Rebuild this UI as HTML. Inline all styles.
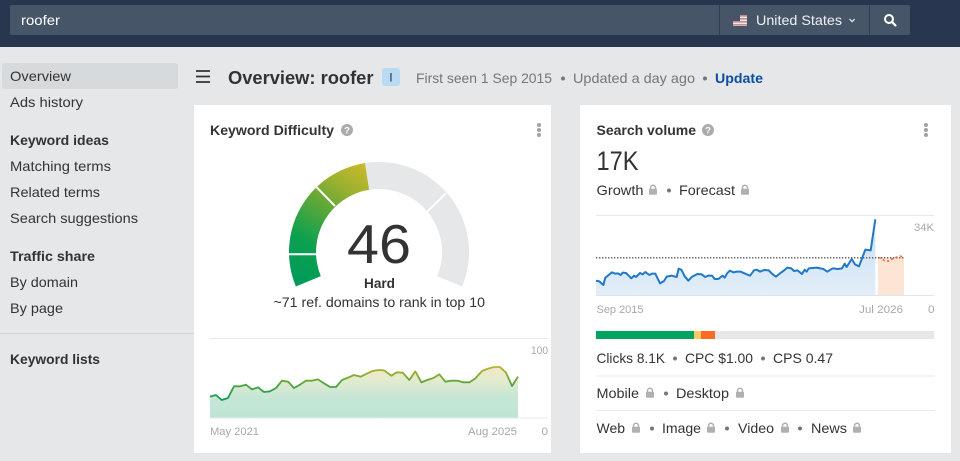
<!DOCTYPE html>
<html><head><meta charset="utf-8"><title>Overview: roofer</title>
<style>
html,body{margin:0;padding:0;width:960px;height:461px;overflow:hidden;background:#e6e7e9}
svg{display:block;position:absolute;left:0;top:0}
text{font-family:"Liberation Sans",sans-serif;font-size:14px;fill:#333}
.b{font-weight:700}
.g{fill:#767676}
.s{font-size:11px;fill:#a8a8a8}
</style></head>
<body>
<svg width="960" height="461" viewBox="0 0 960 461" xmlns="http://www.w3.org/2000/svg">
<defs>
<linearGradient id="gg" gradientUnits="userSpaceOnUse" x1="300" y1="285" x2="372" y2="172">
<stop offset="0" stop-color="#009a5b"/><stop offset=".3" stop-color="#0ca04f"/><stop offset=".6" stop-color="#5fa838"/><stop offset=".78" stop-color="#98b030"/><stop offset="1" stop-color="#c6b92b"/>
</linearGradient>
<linearGradient id="ls" gradientUnits="userSpaceOnUse" x1="0" y1="105" x2="0" y2="210">
<stop offset="0" stop-color="#c4b52c"/><stop offset=".2" stop-color="#9cae30"/><stop offset=".45" stop-color="#62a83a"/><stop offset="1" stop-color="#0a9c58"/>
</linearGradient>
<linearGradient id="lf" gradientUnits="userSpaceOnUse" x1="0" y1="108" x2="0" y2="263">
<stop offset="0" stop-color="#f5e7c6"/><stop offset=".25" stop-color="#e5ebcd"/><stop offset=".6" stop-color="#c6e6d6"/><stop offset="1" stop-color="#bfe5d5"/>
</linearGradient>
<linearGradient id="bf" gradientUnits="userSpaceOnUse" x1="0" y1="130" x2="0" y2="270">
<stop offset="0" stop-color="#d3e5f6"/><stop offset="1" stop-color="#e2eef9"/>
</linearGradient>
<g id="lock"><rect x="-4" y="-1.200" width="8" height="5.900" rx="1" fill="#b0b0b0"/><path d="M-2.500 -1V-2.200A2.500 2.500 0 0 1 2.500 -2.200V-1" fill="none" stroke="#b0b0b0" stroke-width="1.500"/></g>
<g id="keb"><circle cx="0" cy="-5" r="2" fill="#a2a2a2"/><circle cx="0" cy="0" r="2" fill="#a2a2a2"/><circle cx="0" cy="5" r="2" fill="#a2a2a2"/></g>
</defs>

<!-- header -->
<rect x="0" y="0" width="960" height="47" fill="#283650"/>
<rect x="10" y="5" width="900" height="30" rx="2" fill="#475569"/>
<rect x="719" y="5" width="1" height="30" fill="#2f3e57"/>
<rect x="869" y="5" width="1" height="30" fill="#2f3e57"/>
<text x="21" y="25" textLength="39" lengthAdjust="spacingAndGlyphs" style="fill:#fff">roofer</text>
<g>
<rect x="733" y="15" width="14" height="11" fill="#e8e8e8"/>
<rect x="733" y="15" width="14" height="1.600" fill="#c78d8d"/><rect x="733" y="18" width="14" height="1.600" fill="#c78d8d"/><rect x="733" y="21" width="14" height="1.600" fill="#c78d8d"/><rect x="733" y="24" width="14" height="1.600" fill="#c78d8d"/>
<rect x="733" y="15" width="7" height="6" fill="#4a5068"/>
</g>
<text x="756" y="25" textLength="86" lengthAdjust="spacingAndGlyphs" style="fill:#eef0f2">United States</text>
<path d="M849.500 19l2.600 2.600 2.600-2.600" fill="none" stroke="#e8eaed" stroke-width="1.200"/>
<circle cx="889" cy="19" r="4" fill="none" stroke="#fff" stroke-width="2"/>
<path d="M892 22l3.500 3.500" stroke="#fff" stroke-width="2.200" stroke-linecap="round"/>

<!-- sidebar -->
<rect x="2" y="63" width="176" height="26" rx="3" fill="#d7dadd"/>
<text x="10" y="81" textLength="61" lengthAdjust="spacingAndGlyphs">Overview</text>
<text x="10" y="107" textLength="73" lengthAdjust="spacingAndGlyphs">Ads history</text>
<text x="10" y="145" textLength="99" lengthAdjust="spacingAndGlyphs" class="b">Keyword ideas</text>
<text x="10" y="171" textLength="101" lengthAdjust="spacingAndGlyphs">Matching terms</text>
<text x="10" y="197" textLength="90" lengthAdjust="spacingAndGlyphs">Related terms</text>
<text x="10" y="223" textLength="128" lengthAdjust="spacingAndGlyphs">Search suggestions</text>
<text x="10" y="261" textLength="85" lengthAdjust="spacingAndGlyphs" class="b">Traffic share</text>
<text x="10" y="287" textLength="68" lengthAdjust="spacingAndGlyphs">By domain</text>
<text x="10" y="313" textLength="53" lengthAdjust="spacingAndGlyphs">By page</text>
<rect x="0" y="333" width="194" height="1" fill="#d3d5d8"/>
<text x="10" y="364" textLength="90" lengthAdjust="spacingAndGlyphs" class="b">Keyword lists</text>

<!-- title row -->
<path d="M196 71h14M196 76.500h14M196 82h14" stroke="#333" stroke-width="1.800"/>
<text x="228" y="84" textLength="145.500" lengthAdjust="spacingAndGlyphs" class="b" style="font-size:18px">Overview: roofer</text>
<rect x="382" y="68" width="18" height="18" rx="3" fill="#b9daf3"/>
<rect x="390.200" y="73" width="1.500" height="8.500" fill="#4d5a68"/>
<text x="416" y="83" textLength="136" lengthAdjust="spacingAndGlyphs" class="g">First seen 1 Sep 2015</text>
<circle cx="563" cy="78.500" r="2" fill="#767676"/>
<text x="573" y="83" textLength="122" lengthAdjust="spacingAndGlyphs" class="g">Updated a day ago</text>
<circle cx="705" cy="78.500" r="2" fill="#767676"/>
<text x="715" y="83" textLength="48" lengthAdjust="spacingAndGlyphs" class="b" style="fill:#0a4ea3">Update</text>

<!-- cards -->
<rect x="194" y="105" width="357" height="348" fill="#fff"/>
<rect x="580" y="105" width="371" height="348" fill="#fff"/>

<!-- KD card -->
<text x="210" y="135" textLength="124" lengthAdjust="spacingAndGlyphs" class="b">Keyword Difficulty</text>
<circle cx="347" cy="130" r="6" fill="#a9abae"/>
<text x="347" y="133.500" text-anchor="middle" class="b" style="font-size:9.500px;fill:#fff">?</text>
<use href="#keb" x="539" y="130"/>

<path d="M364.920 163.100A90 90 0 0 1 462.150 286.440L437.200 276.100A63 63 0 0 0 369.150 189.800Z" fill="#e6e7e9"/>
<path d="M295.850 286.440A90 90 0 0 1 364.920 163.100L369.150 189.800A63 63 0 0 0 320.800 276.100Z" fill="url(#gg)"/>
<path d="M284 254.300H322M316.700 187.300L335 206M446 193.300L427.300 211.700" stroke="#fff" stroke-width="2" fill="none"/>
<text x="347" y="263" textLength="64" lengthAdjust="spacingAndGlyphs" style="font-size:55px">46</text>
<text x="364" y="288" textLength="31" lengthAdjust="spacingAndGlyphs" class="b">Hard</text>
<text x="273.500" y="307" textLength="211.500" lengthAdjust="spacingAndGlyphs">~71 ref. domains to rank in top 10</text>

<rect x="210" y="338" width="338" height="1" fill="#e8e9eb"/>
<rect x="210" y="417.500" width="338" height="1" fill="#e8e9eb"/>
<svg x="200" y="330" width="350" height="110" viewBox="0 0 1050 330">
<path d="M30 200L48 195L65 210L84 204L102 169L120 169L138 164L156 178L174 172L192 186L210 184L228 174L246 152L264 155L282 174L300 164L318 152L336 152L354 148L372 160L390 171L408 171L426 150L444 143L462 135L482 140L500 131L518 123L536 120L552 121L574 137L590 127L608 128L628 150L646 124L664 157L682 150L700 144L718 133L736 155L754 152L772 152L790 157L808 157L826 145L846 123L864 116L882 111L900 111L918 128L936 168L954 140V263H30Z" fill="url(#lf)"/>
<path d="M30 200L48 195L65 210L84 204L102 169L120 169L138 164L156 178L174 172L192 186L210 184L228 174L246 152L264 155L282 174L300 164L318 152L336 152L354 148L372 160L390 171L408 171L426 150L444 143L462 135L482 140L500 131L518 123L536 120L552 121L574 137L590 127L608 128L628 150L646 124L664 157L682 150L700 144L718 133L736 155L754 152L772 152L790 157L808 157L826 145L846 123L864 116L882 111L900 111L918 128L936 168L954 140" fill="none" stroke="url(#ls)" stroke-width="5.500" stroke-linejoin="round"/>
</svg>
<text x="531" y="354" textLength="17" lengthAdjust="spacingAndGlyphs" class="s">100</text>
<text x="210" y="435" textLength="49" lengthAdjust="spacingAndGlyphs" class="s">May 2021</text>
<text x="468" y="435" textLength="49" lengthAdjust="spacingAndGlyphs" class="s">Aug 2025</text>
<text x="541.500" y="435" textLength="6.500" lengthAdjust="spacingAndGlyphs" class="s">0</text>

<!-- SV card -->
<text x="596.500" y="135" textLength="99.500" lengthAdjust="spacingAndGlyphs" class="b">Search volume</text>
<circle cx="708" cy="130" r="6" fill="#a9abae"/>
<text x="708" y="133.500" text-anchor="middle" class="b" style="font-size:9.500px;fill:#fff">?</text>
<use href="#keb" x="926" y="130"/>
<text x="596.500" y="170" textLength="42" lengthAdjust="spacingAndGlyphs" style="font-size:27px">17K</text>
<text x="596.500" y="195" textLength="47" lengthAdjust="spacingAndGlyphs">Growth</text>
<use href="#lock" x="653" y="190"/>
<circle cx="669" cy="190.500" r="2" fill="#767676"/>
<text x="679" y="195" textLength="56" lengthAdjust="spacingAndGlyphs">Forecast</text>
<use href="#lock" x="745" y="190"/>

<rect x="596" y="215" width="338" height="1" fill="#e8e9eb"/>
<rect x="596" y="295" width="338" height="1" fill="#e3e4e6"/>
<svg x="590" y="205" width="350" height="120" viewBox="0 0 1050 360">
<path d="M18 227L28 229L40 240L46 218L56 210L66 202L76 206L84 205L92 210L98 203L108 204L116 212L124 220L132 212L138 216L150 204L158 208L166 201L178 210L186 206L196 206L210 235L222 228L230 215L245 212L260 216L266 191L274 194L284 214L295 227L305 216L322 207L335 208L345 216L355 212L366 212L374 222L385 222L398 212L404 218L412 204L420 197L430 202L440 200L452 200L470 208L480 212L492 196L500 194L510 200L522 195L536 196L548 208L558 215L570 205L580 198L592 188L604 190L612 198L622 196L636 207L644 194L650 200L656 190L680 188L700 192L712 200L728 190L744 192L756 190L764 176L770 186L785 162L795 178L807 184L826 134L842 136L856 43V270H18Z" fill="url(#bf)"/>
<rect x="864" y="158" width="78" height="112" fill="#fde5d6"/>
<path d="M18 158.500H942" stroke="#555" stroke-width="4" stroke-dasharray="4 5" fill="none"/>
<path d="M866 158L875 160L884 168L897 168L910 160L930 153L942 157" fill="none" stroke="#f5671f" stroke-width="4.500" stroke-dasharray="7 7"/>
<path d="M18 227L28 229L40 240L46 218L56 210L66 202L76 206L84 205L92 210L98 203L108 204L116 212L124 220L132 212L138 216L150 204L158 208L166 201L178 210L186 206L196 206L210 235L222 228L230 215L245 212L260 216L266 191L274 194L284 214L295 227L305 216L322 207L335 208L345 216L355 212L366 212L374 222L385 222L398 212L404 218L412 204L420 197L430 202L440 200L452 200L470 208L480 212L492 196L500 194L510 200L522 195L536 196L548 208L558 215L570 205L580 198L592 188L604 190L612 198L622 196L636 207L644 194L650 200L656 190L680 188L700 192L712 200L728 190L744 192L756 190L764 176L770 186L785 162L795 178L807 184L826 134L842 136L856 43" fill="none" stroke="#1f78c8" stroke-width="6" stroke-linejoin="round"/>
</svg>
<text x="914" y="231" textLength="20" lengthAdjust="spacingAndGlyphs" class="s">34K</text>
<text x="596.500" y="313" textLength="47" lengthAdjust="spacingAndGlyphs" class="s">Sep 2015</text>
<text x="859" y="313" textLength="44" lengthAdjust="spacingAndGlyphs" class="s">Jul 2026</text>
<text x="928" y="313" textLength="6.500" lengthAdjust="spacingAndGlyphs" class="s">0</text>

<rect x="596" y="331" width="338" height="8" fill="#e6e7e9"/>
<rect x="596" y="331" width="98" height="8" fill="#00a360"/>
<rect x="694" y="331" width="7" height="8" fill="#f8c861"/>
<rect x="701" y="331" width="14" height="8" fill="#fc6b26"/>

<text x="596.500" y="363" textLength="68.500" lengthAdjust="spacingAndGlyphs">Clicks 8.1K</text>
<circle cx="675" cy="358.500" r="2" fill="#767676"/>
<text x="685" y="363" textLength="68" lengthAdjust="spacingAndGlyphs">CPC $1.00</text>
<circle cx="763" cy="358.500" r="2" fill="#767676"/>
<text x="773" y="363" textLength="60" lengthAdjust="spacingAndGlyphs">CPS 0.47</text>
<rect x="596" y="375.500" width="339" height="1" fill="#e8e9eb"/>

<text x="596.500" y="398" textLength="42.500" lengthAdjust="spacingAndGlyphs">Mobile</text>
<use href="#lock" x="650" y="393"/>
<circle cx="666" cy="393.500" r="2" fill="#767676"/>
<text x="676" y="398" textLength="53" lengthAdjust="spacingAndGlyphs">Desktop</text>
<use href="#lock" x="740" y="393"/>
<rect x="596" y="410" width="339" height="1" fill="#e8e9eb"/>

<text x="596.500" y="433" textLength="28.500" lengthAdjust="spacingAndGlyphs">Web</text>
<use href="#lock" x="636" y="428"/>
<circle cx="652" cy="428.500" r="2" fill="#767676"/>
<text x="662" y="433" textLength="39" lengthAdjust="spacingAndGlyphs">Image</text>
<use href="#lock" x="711" y="428"/>
<circle cx="727" cy="428.500" r="2" fill="#767676"/>
<text x="738" y="433" textLength="36" lengthAdjust="spacingAndGlyphs">Video</text>
<use href="#lock" x="785" y="428"/>
<circle cx="800" cy="428.500" r="2" fill="#767676"/>
<text x="811" y="433" textLength="36" lengthAdjust="spacingAndGlyphs">News</text>
<use href="#lock" x="857" y="428"/>
</svg>
</body></html>
